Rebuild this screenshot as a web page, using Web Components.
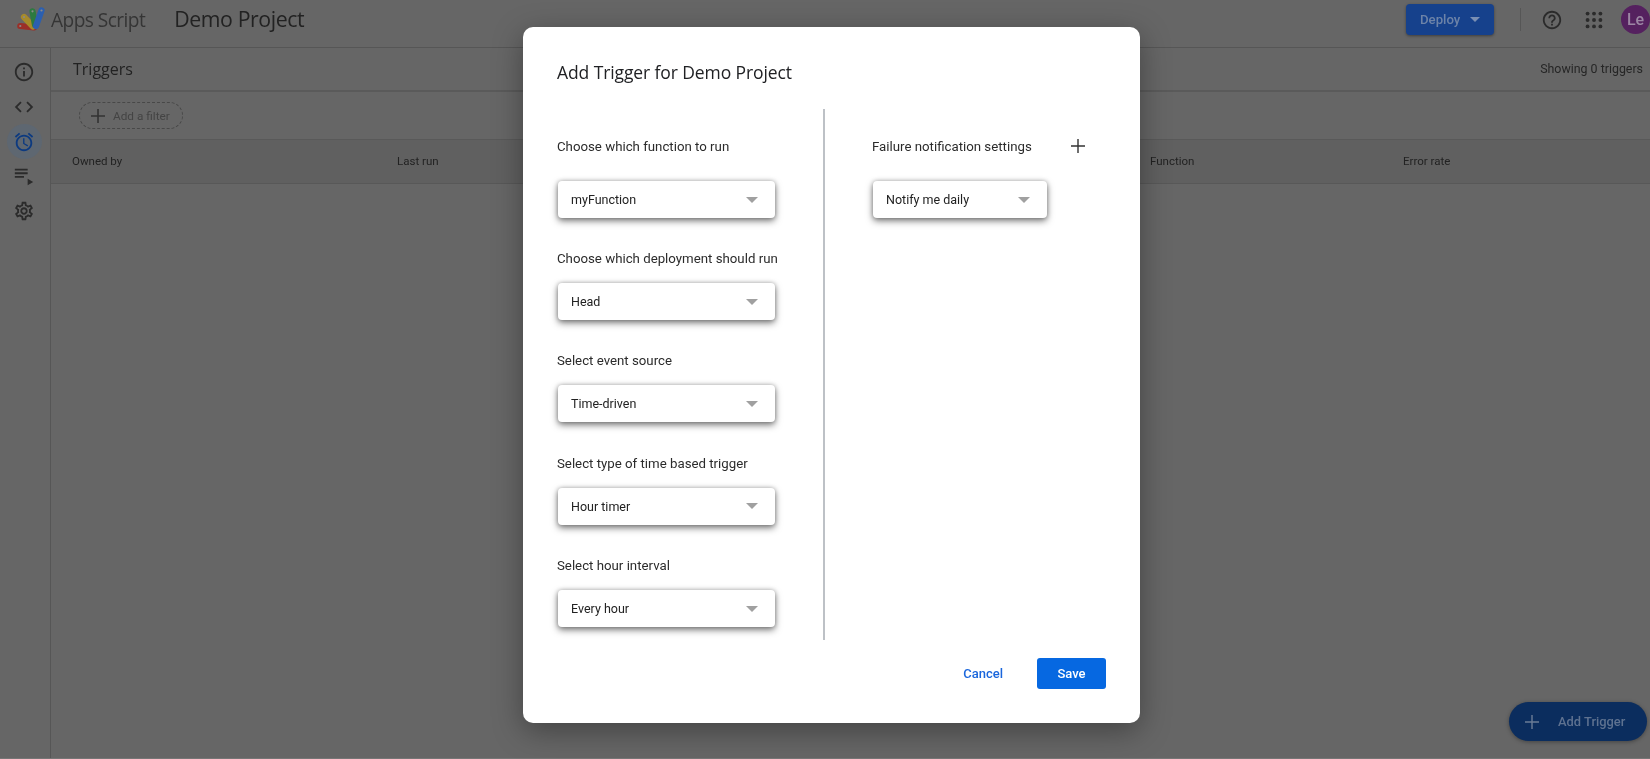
<!DOCTYPE html>
<html lang="en"><head><meta charset="utf-8"><title>Apps Script</title>
<style>
html,body{margin:0;height:759px;overflow:hidden;background:#666;font-family:Roboto,"Liberation Sans",sans-serif}
body{filter:blur(.35px)}
</style></head><body>
<as-app>
  <as-topbar slot="top" project="Demo Project"></as-topbar>
  <as-sidebar slot="side"></as-sidebar>
  <as-triggers slot="main"></as-triggers>
</as-app>
<as-fab>Add Trigger</as-fab>
<as-dialog heading="Add Trigger for Demo Project">
  <as-field slot="left" label="Choose which function to run" value="myFunction" first></as-field>
  <as-field slot="left" label="Choose which deployment should run" value="Head"></as-field>
  <as-field slot="left" label="Select event source" value="Time-driven"></as-field>
  <as-field slot="left" label="Select type of time based trigger" value="Hour timer"></as-field>
  <as-field slot="left" label="Select hour interval" value="Every hour"></as-field>
  <as-field slot="right" label="Failure notification settings" value="Notify me daily" first narrow plus></as-field>
</as-dialog>
<script>
function def(name, html, init){
  customElements.define(name, class extends HTMLElement{
    constructor(){super();this.attachShadow({mode:'open'}).innerHTML=html;}
    connectedCallback(){ if(init) init.call(this,this.shadowRoot); }
  });
}
const UI='Roboto,sans-serif', GS='"Open Sans",Roboto,sans-serif';
def('as-app',`<style>
:host{display:grid;grid-template-columns:51px 1fr;grid-template-rows:48px 710px;width:1650px;height:759px;box-sizing:border-box;border-bottom:1px solid #767676}
.t{grid-column:1/3;display:block;border-bottom:1px solid #565656;box-sizing:border-box}
.s{display:block;border-right:1px solid #565656}
.m{display:block;min-width:0}
</style><div class="t"><slot name="top"></slot></div><div class="s"><slot name="side"></slot></div><div class="m"><slot name="main"></slot></div>`);
def('as-topbar',`<style>
:host{display:flex;align-items:center;height:39px;padding-left:17px;color:#262626}
.logo{width:30px;height:26px;flex:none;margin-top:-3px}
.app{font:400 19.1px ${GS};color:#353535;margin-left:4px;letter-spacing:-.55px;white-space:nowrap}
.proj{font:400 21.3px ${GS};color:#222;margin:-2px 0 0 29px;letter-spacing:-.4px;white-space:nowrap}
.sp{flex:1}
.dep{width:88px;height:31px;box-sizing:border-box;background:#16418c;border-radius:4px;display:flex;align-items:center;box-shadow:0 1px 3px rgba(0,0,0,.4);color:#6d83a8;font:500 13.2px ${UI};padding-left:14px;margin-right:26px}
.dep i{width:0;height:0;border:5px solid transparent;border-top-color:#7a8fb3;border-bottom:0;margin-left:auto;margin-right:14px}
.div{width:1px;height:23px;background:#565656;margin-right:20px}
.ic{width:22px;height:22px;flex:none}
.av{width:29px;height:29px;flex:none;border-radius:50%;background:#55215f;color:#9c86a4;font:500 16px ${UI};display:flex;align-items:center;justify-content:center;margin:0 0 0 16px}
</style>
<svg class="logo" viewBox="0 0 30 26">
<g fill="none" stroke-linecap="round" stroke-width="6.2">
<path d="M3.3 21 L17 22.5" stroke="#9b2f28"/>
<path d="M7 12 L16 21.5" stroke="#a68a2a"/>
<path d="M15.5 6.3 L18 20" stroke="#2d7a3f"/>
<path d="M24.5 5.5 L19 21" stroke="#2b5fb0"/>
</g>
<g fill="#8a8a8a"><circle cx="3.3" cy="21" r="1.1"/><circle cx="7" cy="12" r="1.1"/><circle cx="15.5" cy="6.3" r="1.1"/><circle cx="24.5" cy="5.5" r="1.1"/></g>
</svg>
<span class="app">Apps Script</span><span class="proj" id="p"></span><span class="sp"></span>
<div class="dep">Deploy<i></i></div><div class="div"></div>
<svg class="ic" viewBox="0 0 24 24" fill="#2b2b2b"><path d="M11 18h2v-2h-2v2zm1-16C6.48 2 2 6.48 2 12s4.48 10 10 10 10-4.48 10-10S17.52 2 12 2zm0 18c-4.41 0-8-3.59-8-8s3.59-8 8-8 8 3.59 8 8-3.59 8-8 8zm0-14c-2.21 0-4 1.79-4 4h2c0-1.1.9-2 2-2s2 .9 2 2c0 2-3 1.75-3 5h2c0-2.25 3-2.5 3-5 0-2.21-1.79-4-4-4z"/></svg>
<svg class="ic" style="margin-left:20px" viewBox="0 0 24 24" fill="#2b2b2b"><circle cx="5" cy="5" r="2.1"/><circle cx="12" cy="5" r="2.1"/><circle cx="19" cy="5" r="2.1"/><circle cx="5" cy="12" r="2.1"/><circle cx="12" cy="12" r="2.1"/><circle cx="19" cy="12" r="2.1"/><circle cx="5" cy="19" r="2.1"/><circle cx="12" cy="19" r="2.1"/><circle cx="19" cy="19" r="2.1"/></svg>
<div class="av">Le</div>`,function(r){r.getElementById('p').textContent=this.getAttribute('project');});
def('as-sidebar',`<style>
:host{display:flex;flex-direction:column;align-items:center;padding-top:7px;gap:0}
.b{width:35px;height:34.7px;border-radius:50%;display:flex;align-items:center;justify-content:center;margin-left:-2px}
.b.on{background:#5e6771}
svg{width:22px;height:22px;fill:#2b2b2b}
.on svg{fill:#0c3a80}
</style>
<div class="b"><svg viewBox="0 0 24 24"><path d="M11 7h2v2h-2zm0 4h2v6h-2zm1-9C6.48 2 2 6.48 2 12s4.48 10 10 10 10-4.48 10-10S17.52 2 12 2zm0 18c-4.41 0-8-3.59-8-8s3.59-8 8-8 8 3.59 8 8-3.59 8-8 8z"/></svg></div>
<div class="b"><svg viewBox="0 0 24 24"><path d="M9.4 16.6 4.8 12l4.6-4.6L8 6l-6 6 6 6 1.4-1.4zm5.2 0 4.6-4.6-4.6-4.6L16 6l6 6-6 6-1.4-1.4z"/></svg></div>
<div class="b on"><svg viewBox="0 0 24 24"><path d="M22 5.72l-4.6-3.86-1.29 1.53 4.6 3.86L22 5.72zM7.88 3.39 6.6 1.86 2 5.71l1.29 1.53 4.59-3.85zM12.5 8H11v6l4.75 2.85.75-1.23-4-2.37V8zM12 4c-4.97 0-9 4.03-9 9s4.03 9 9 9 9-4.03 9-9-4.03-9-9-9zm0 16c-3.87 0-7-3.13-7-7s3.13-7 7-7 7 3.13 7 7-3.13 7-7 7z"/></svg></div>
<div class="b"><svg viewBox="0 0 24 24"><path d="M3 5h14v2H3zm0 4h14v2H3zm0 4h10v2H3zm14 3 6 3.5-6 3.5z" transform="translate(-1 -1)"/></svg></div>
<div class="b"><svg viewBox="0 0 24 24"><path d="M19.43 12.98c.04-.32.07-.64.07-.98s-.03-.66-.07-.98l2.11-1.65c.19-.15.24-.42.12-.64l-2-3.46c-.12-.22-.39-.3-.61-.22l-2.49 1c-.52-.4-1.08-.73-1.69-.98l-.38-2.65C14.46 2.18 14.25 2 14 2h-4c-.25 0-.46.18-.49.42l-.38 2.65c-.61.25-1.17.59-1.69.98l-2.49-1c-.23-.09-.49 0-.61.22l-2 3.46c-.13.22-.07.49.12.64l2.11 1.65c-.04.32-.07.65-.07.98s.03.66.07.98l-2.11 1.65c-.19.15-.24.42-.12.64l2 3.46c.12.22.39.3.61.22l2.49-1c.52.4 1.08.73 1.69.98l.38 2.65c.03.24.24.42.49.42h4c.25 0 .46-.18.49-.42l.38-2.65c.61-.25 1.17-.59 1.69-.98l2.49 1c.23.09.49 0 .61-.22l2-3.46c.12-.22.07-.49-.12-.64l-2.11-1.65zM17.45 11.27c.04.31.05.52.05.73 0 .21-.02.43-.05.73l-.14 1.13.89.7 1.08.84-.7 1.21-1.27-.51-1.04-.42-.9.68c-.43.32-.84.56-1.25.73l-1.06.43-.16 1.13-.2 1.35h-1.4l-.19-1.35-.16-1.13-1.06-.43c-.43-.18-.83-.41-1.23-.71l-.91-.7-1.06.43-1.27.51-.7-1.21 1.08-.84.89-.7-.14-1.13c-.03-.31-.05-.54-.05-.74s.02-.43.05-.73l.14-1.13-.89-.7-1.08-.84.7-1.21 1.27.51 1.04.42.9-.68c.43-.32.84-.56 1.25-.73l1.06-.43.16-1.13.2-1.35h1.39l.19 1.35.16 1.13 1.06.43c.43.18.83.41 1.23.71l.91.7 1.06-.43 1.27-.51.7 1.21-1.07.85-.89.7.14 1.13zM12 8c-2.21 0-4 1.79-4 4s1.79 4 4 4 4-1.79 4-4-1.79-4-4-4zm0 6c-1.1 0-2-.9-2-2s.9-2 2-2 2 .9 2 2-.9 2-2 2z"/></svg></div>`);
def('as-triggers',`<style>
:host{display:block;color:#262626;font-family:${UI}}
.h{height:42px;display:flex;align-items:center;justify-content:space-between;padding:0 7px 0 22px;border-bottom:2px solid #5a5a5a}
.h b{font:400 16px ${GS};color:#222}
.h span{font:400 12.4px ${UI};color:#262626;margin-top:-1px}
.f{height:48px;display:flex;align-items:center;padding-left:28px;border-bottom:1px solid #595959;box-sizing:border-box}
.pill{width:104px;height:27px;box-sizing:border-box;border:1px dashed #484848;border-radius:14px;display:flex;align-items:center;padding-left:10px;gap:7px;font:400 11.8px ${UI};color:#444}
.pill svg{width:16px;height:16px;fill:#333}
.t{height:43px;box-sizing:content-box;display:grid;grid-template-columns:325px 753px 253px 1fr;align-items:center;padding:0 0 0 21px;background:#606060;border-bottom:1px solid #585858;font:400 11.5px ${UI};color:#222}
.t span{margin-top:-1px}
</style>
<div class="h"><b>Triggers</b><span>Showing 0 triggers</span></div>
<div class="f"><div class="pill"><svg viewBox="0 0 16 16"><path d="M7.2 1h1.6v6.2H15v1.6H8.8V15H7.2V8.8H1V7.2h6.2z"/></svg>Add a filter</div></div>
<div class="t"><span>Owned by</span><span>Last run</span><span>Function</span><span>Error rate</span></div>`);
def('as-fab',`<style>
:host{position:absolute;left:1509px;top:702px;width:138px;height:39px;border-radius:20px;background:#0b2d5e;box-shadow:0 1px 4px rgba(0,0,0,.35);display:flex;align-items:center;padding-left:16px;box-sizing:border-box;gap:19px;font:500 12.9px ${UI};color:#5f7290;white-space:nowrap}
svg{width:14px;height:14px;fill:#6b7c96;flex:none}
</style><svg viewBox="0 0 14 14"><path d="M6.3 0h1.4v6.3H14v1.4H7.7V14H6.3V7.7H0V6.3h6.3z"/></svg><slot></slot>`);
def('as-dialog',`<style>
:host{position:absolute;left:523px;top:27px;width:617px;height:696px;box-sizing:border-box;background:#fff;border-radius:10px;box-shadow:0 8px 30px rgba(0,0,0,.35);padding:0 34px;display:flex;flex-direction:column;color:#222}
h2{margin:0;font:500 17.5px ${GS};color:#202124;height:82px;display:flex;align-items:center;letter-spacing:-.1px;padding-top:7px;box-sizing:border-box}
.body{display:flex;height:531px;}
.l{width:266px;border-right:2px solid #bdc1c6;flex:none;padding-top:22px}
.r{padding:22px 0 0 47px}
.foot{display:flex;justify-content:flex-end;align-items:center;height:31px;margin-top:18px;gap:34px;font:500 13px ${UI}}
.c{color:#1a66dc}
.s{width:69px;height:31px;background:#0668e1;border-radius:3px;color:#fff;display:flex;align-items:center;justify-content:center}
</style>
<h2 id="h"></h2>
<div class="body"><div class="l"><slot name="left"></slot></div><div class="r"><slot name="right"></slot></div></div>
<div class="foot"><span class="c">Cancel</span><span class="s">Save</span></div>`,function(r){r.getElementById('h').textContent=this.getAttribute('heading');});
def('as-field',`<style>
:host{display:block;height:102.4px;font-family:${UI}}
:host([first]){height:113.5px;}
.lab{height:28px;display:flex;align-items:center;font:400 13.25px ${UI};color:#2b2b2b;white-space:nowrap}
:host([first]) .lab{height:30px}
.lab svg{width:14px;height:14px;fill:#333;margin-left:39px}
.sel{margin-top:10.5px;margin-left:1px;width:217px;height:37px;box-sizing:border-box;border-radius:4px;background:#fff;box-shadow:0 3px 7px rgba(0,0,0,.5),0 0 4px rgba(0,0,0,.25);display:flex;align-items:center;justify-content:space-between;padding:0 17px 0 13px;font:400 12.5px Roboto,sans-serif;color:#222}
:host([first]) .sel{margin-top:20px}
:host([narrow]) .sel{width:174px}
i{width:0;height:0;border:6px solid transparent;border-top:6px solid #a0a0a0;border-bottom:0}
</style><div class="lab"><span id="l"></span><svg id="plus" viewBox="0 0 14 14"><path d="M6.3 0h1.4v6.3H14v1.4H7.7V14H6.3V7.7H0V6.3h6.3z"/></svg></div>
<div class="sel"><span id="v"></span><i></i></div>`,function(r){
 r.getElementById('l').textContent=this.getAttribute('label');
 r.getElementById('v').textContent=this.getAttribute('value');
 if(!this.hasAttribute('plus')) r.getElementById('plus').remove();
});
</script></body></html>
